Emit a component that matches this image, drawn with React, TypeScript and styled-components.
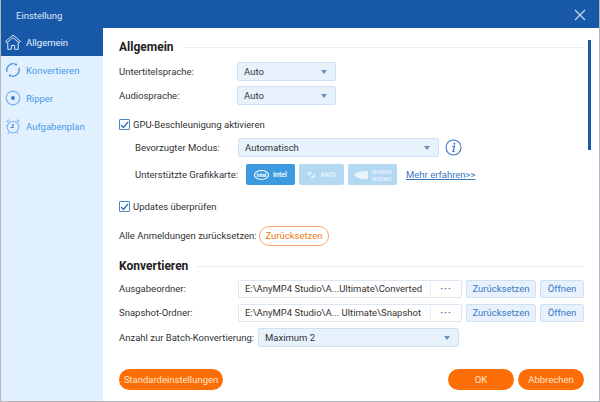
import React from 'react';
import styled, { createGlobalStyle } from 'styled-components';

const GlobalStyle = createGlobalStyle`
  html, body { margin: 0; padding: 0; background: #fff; }
  body { font-family: Roboto, "Liberation Sans", Arial, sans-serif; }
  * { box-sizing: border-box; }
`;

const HomeIcon = () => (
  <svg width="18" height="18" viewBox="0 0 18 18" fill="none" stroke="#dceaf8" strokeWidth="1">
    <path d="M1.500 8.500 9 2l7.500 6.500-1.600 1.200L9 4.600 3.100 9.700z" />
    <path d="M3.800 9.500v6.800h3.600v-4h3.200v4h3.600V9.500" />
  </svg>
);

const SyncIcon = () => (
  <svg width="18" height="18" viewBox="0 0 18 18" fill="none" stroke="#4a90d9" strokeWidth="1.2">
    <path d="M3 11a6.500 6.500 0 0 1 7.500-8.200" />
    <path d="M15 7a6.500 6.500 0 0 1-7.500 8.200" />
    <circle cx="12" cy="3.600" r="1" fill="#2e6fc0" stroke="none" />
    <circle cx="6" cy="14.400" r="1" fill="#2e6fc0" stroke="none" />
  </svg>
);

const RipIcon = () => (
  <svg width="18" height="18" viewBox="0 0 18 18" fill="none">
    <circle cx="9" cy="9" r="6.800" stroke="#7db4ea" strokeWidth="1.2" />
    <circle cx="9" cy="9" r="1.900" fill="#2f78c8" />
  </svg>
);

const ClockIcon = () => (
  <svg width="18" height="18" viewBox="0 0 18 18" fill="none" stroke="#7db4ea" strokeWidth="1.1">
    <circle cx="9" cy="10" r="5.800" />
    <path d="M9 6.800V10.500h-2.400" stroke="#3f82cc" />
    <path d="M2.600 5 5.200 2.600M15.400 5l-2.600-2.400" />
    <path d="M5 15.500 4 17M13 15.500l1 1.500" />
  </svg>
);

const CloseIcon = () => (
  <svg width="12" height="12" viewBox="0 0 12 12" stroke="#cfe0f5" strokeWidth="1.1">
    <path d="M1 1l10 10M11 1 1 11" />
  </svg>
);

const InfoIcon = () => (
  <svg width="17" height="17" viewBox="0 0 17 17" fill="none">
    <circle cx="8.500" cy="8.500" r="7.500" stroke="#3b78c4" strokeWidth="1.1" />
    <circle cx="9.400" cy="4.800" r="1" fill="#3b78c4" />
    <path d="M7.200 7.300h2.200l-1.300 5h1.400" stroke="#3b78c4" strokeWidth="1.3" />
  </svg>
);

const ChipIcon = () => (
  <svg width="9" height="8" viewBox="0 0 11 9" fill="none" stroke="#fff" strokeWidth="1.3">
    <path d="M2 5.500V2h4M9 3.500V7H5" />
  </svg>
);

const NvidiaIcon = () => (
  <svg width="15" height="10" viewBox="0 0 17 11">
    <path d="M1 5.500C4 2 8 1 17 1v9c-7 .5-12-.5-16-4.500z" fill="#fff" opacity="0.7" />
  </svg>
);

const Window = styled.div`
  width: 600px;
  height: 402px;
  display: flex;
  flex-direction: column;
  border: 1px solid #b4b8bd;
  border-top: 0;
  overflow: hidden;
  position: relative;
`;

const TitleBar = styled.div`
  height: 28px;
  flex: none;
  display: flex;
  align-items: center;
  justify-content: space-between;
  padding: 2px 13px 0 15px;
  background: #1758a9;
  color: #dbe8f7;
  font-size: 9.5px;
`;

const Body = styled.div`
  flex: 1;
  display: flex;
  min-height: 0;
`;

const Sidebar = styled.nav`
  width: 102px;
  flex: none;
  background: #e0f0ff;
`;

const NavItem = styled.div<{ $active?: boolean }>`
  height: 28px;
  display: flex;
  align-items: center;
  gap: 4px;
  padding-left: 3px;
  font-size: 9.5px;
  color: ${({ $active }) => ($active ? '#e6f0fb' : '#4a98e6')};
  background: ${({ $active }) => ($active ? '#1758a9' : 'transparent')};
`;

const Content = styled.main`
  flex: 1;
  padding: 0 15px 0 16px;
  display: flex;
  flex-direction: column;
  background: #fff;
  color: #333;
  font-size: 9.5px;
`;

const SectionHead = styled.div<{ $top: number }>`
  margin-top: ${({ $top }) => $top}px;
  height: 18px;
  display: flex;
  align-items: center;
  gap: 9px;
  font-size: 12px;
  font-weight: 700;
  color: #222;

  &::after {
    content: '';
    flex: 1;
    height: 1px;
    background: #e3eff9;
  }
`;

const Row = styled.div<{ $top: number; $indent?: number }>`
  margin-top: ${({ $top }) => $top}px;
  margin-left: ${({ $indent }) => $indent ?? 0}px;
  height: 19px;
  display: flex;
  align-items: center;
`;

const Label = styled.span<{ $width?: number }>`
  width: ${({ $width }) => ($width ? `${$width}px` : 'auto')};
  flex: none;
  white-space: nowrap;
`;

const Select = styled.div<{ $width: number }>`
  width: ${({ $width }) => $width}px;
  height: 19px;
  flex: none;
  display: flex;
  align-items: center;
  justify-content: space-between;
  padding: 0 8px 0 6px;
  background: #e8f2fd;
  border: 1px solid #cfe0f3;
  border-radius: 2px;
  color: #333;

  &::after {
    content: '';
    border-left: 3px solid transparent;
    border-right: 3px solid transparent;
    border-top: 4px solid #6c8fb8;
  }
`;

const Check = styled.span`
  width: 11px;
  height: 11px;
  margin-right: 3px;
  flex: none;
  display: flex;
  align-items: center;
  justify-content: center;
  border: 1px solid #4d87c9;
  border-radius: 1px;
  background: #fff;
`;

const CheckMark = () => (
  <Check>
    <svg width="9" height="8" viewBox="0 0 9 8" fill="none" stroke="#2f6fbd" strokeWidth="1.3">
      <path d="M1 4l2.500 2.500L8 1" />
    </svg>
  </Check>
);

const GpuRow = styled.div`
  display: flex;
  gap: 4px;
`;

const GpuButton = styled.div<{ $on?: boolean; $width: number }>`
  width: ${({ $width }) => $width}px;
  height: 21px;
  flex: none;
  display: flex;
  align-items: center;
  justify-content: center;
  gap: 4px;
  border-radius: 2px;
  background: ${({ $on }) => ($on ? '#3d9ade' : '#b3d8f2')};
  color: ${({ $on }) => ($on ? '#eaf5fd' : '#e3f1fa')};
  font-size: 7px;
  font-weight: 700;
`;

const IntelLogo = styled.span`
  width: 15px;
  height: 10px;
  display: flex;
  align-items: center;
  justify-content: center;
  border: 1px solid #fff;
  border-radius: 50%;
  font-size: 5px;
  color: #fff;
`;

const NvidiaText = styled.span`
  font-size: 6px;
  line-height: 7px;
  text-align: center;
`;

const MoreLink = styled.a`
  margin-left: 9px;
  color: #3b78c4;
  text-decoration: underline;
  white-space: nowrap;
`;

const InfoSlot = styled.span`
  margin-left: 6px;
  display: flex;
`;

const OutlineButton = styled.div`
  width: 70px;
  height: 20px;
  display: flex;
  align-items: center;
  justify-content: center;
  border: 1px solid #f7a46b;
  border-radius: 10px;
  color: #f47a22;
`;

const PathField = styled.div`
  width: 224px;
  height: 18px;
  flex: none;
  display: flex;
  align-items: center;
  border: 1px solid #dbe7f3;
  border-radius: 2px;
`;

const PathText = styled.span`
  flex: 1;
  padding-left: 6px;
  white-space: nowrap;
  overflow: hidden;
`;

const Dots = styled.span`
  width: 31px;
  height: 100%;
  flex: none;
  display: flex;
  align-items: center;
  justify-content: center;
  border-left: 1px solid #e6eef7;
  color: #3b78c4;
  font-weight: 700;
  letter-spacing: 1px;
`;

const LightButton = styled.div<{ $width: number }>`
  width: ${({ $width }) => $width}px;
  height: 18px;
  margin-left: 4px;
  flex: none;
  display: flex;
  align-items: center;
  justify-content: center;
  background: #e8f2fd;
  border: 1px solid #cfe0f3;
  border-radius: 2px;
  color: #3b78c4;
`;

const Footer = styled.div`
  margin-top: 22px;
  display: flex;
  align-items: center;
  gap: 4px;
`;

const Spacer = styled.div`
  flex: 1;
`;

const OrangeButton = styled.div<{ $width: number }>`
  width: ${({ $width }) => $width}px;
  height: 21px;
  display: flex;
  align-items: center;
  justify-content: center;
  border-radius: 11px;
  background: #fd6f06;
  color: #ffe6d2;
`;

const ScrollThumb = styled.div`
  position: absolute;
  right: 8px;
  top: 40px;
  width: 3px;
  height: 110px;
  background: #1758a9;
`;

export default function App() {
  return (
    <Window>
      <GlobalStyle />
      <TitleBar>
        <span>Einstellung</span>
        <CloseIcon />
      </TitleBar>
      <Body>
        <Sidebar>
          <NavItem $active><HomeIcon />Allgemein</NavItem>
          <NavItem><SyncIcon />Konvertieren</NavItem>
          <NavItem><RipIcon />Ripper</NavItem>
          <NavItem><ClockIcon />Aufgabenplan</NavItem>
        </Sidebar>
        <Content>
          <SectionHead $top={10}>Allgemein</SectionHead>
          <Row $top={6}>
            <Label $width={118}>Untertitelsprache:</Label>
            <Select $width={99}>Auto</Select>
          </Row>
          <Row $top={5}>
            <Label $width={118}>Audiosprache:</Label>
            <Select $width={99}>Auto</Select>
          </Row>
          <Row $top={10}>
            <CheckMark />
            <span>GPU-Beschleunigung aktivieren</span>
          </Row>
          <Row $top={4} $indent={16}>
            <Label $width={103}>Bevorzugter Modus:</Label>
            <Select $width={201}>Automatisch</Select>
            <InfoSlot><InfoIcon /></InfoSlot>
          </Row>
          <Row $top={8} $indent={16}>
            <Label $width={111}>Unterstützte Grafikkarte:</Label>
            <GpuRow>
              <GpuButton $on $width={49}><IntelLogo>intel</IntelLogo>Intel</GpuButton>
              <GpuButton $width={45}><ChipIcon />AMD</GpuButton>
              <GpuButton $width={49}><NvidiaIcon /><NvidiaText>NVIDIA<br />NVENC</NvidiaText></GpuButton>
            </GpuRow>
            <MoreLink>Mehr erfahren&gt;&gt;</MoreLink>
          </Row>
          <Row $top={13}>
            <CheckMark />
            <span>Updates überprüfen</span>
          </Row>
          <Row $top={10}>
            <Label $width={140}>Alle Anmeldungen zurücksetzen:</Label>
            <OutlineButton>Zurücksetzen</OutlineButton>
          </Row>
          <SectionHead $top={12}>Konvertieren</SectionHead>
          <Row $top={4}>
            <Label $width={119}>Ausgabeordner:</Label>
            <PathField>
              <PathText>E:\AnyMP4 Studio\A...Ultimate\Converted</PathText>
              <Dots>···</Dots>
            </PathField>
            <LightButton $width={70}>Zurücksetzen</LightButton>
            <LightButton $width={44}>Öffnen</LightButton>
          </Row>
          <Row $top={5}>
            <Label $width={119}>Snapshot-Ordner:</Label>
            <PathField>
              <PathText>E:\AnyMP4 Studio\A... Ultimate\Snapshot</PathText>
              <Dots>···</Dots>
            </PathField>
            <LightButton $width={70}>Zurücksetzen</LightButton>
            <LightButton $width={44}>Öffnen</LightButton>
          </Row>
          <Row $top={6}>
            <Label $width={139}>Anzahl zur Batch-Konvertierung:</Label>
            <Select $width={201}>Maximum 2</Select>
          </Row>
          <Footer>
            <OrangeButton $width={104}>Standardeinstellungen</OrangeButton>
            <Spacer />
            <OrangeButton $width={66}>OK</OrangeButton>
            <OrangeButton $width={66}>Abbrechen</OrangeButton>
          </Footer>
        </Content>
      </Body>
      <ScrollThumb />
    </Window>
  );
}
